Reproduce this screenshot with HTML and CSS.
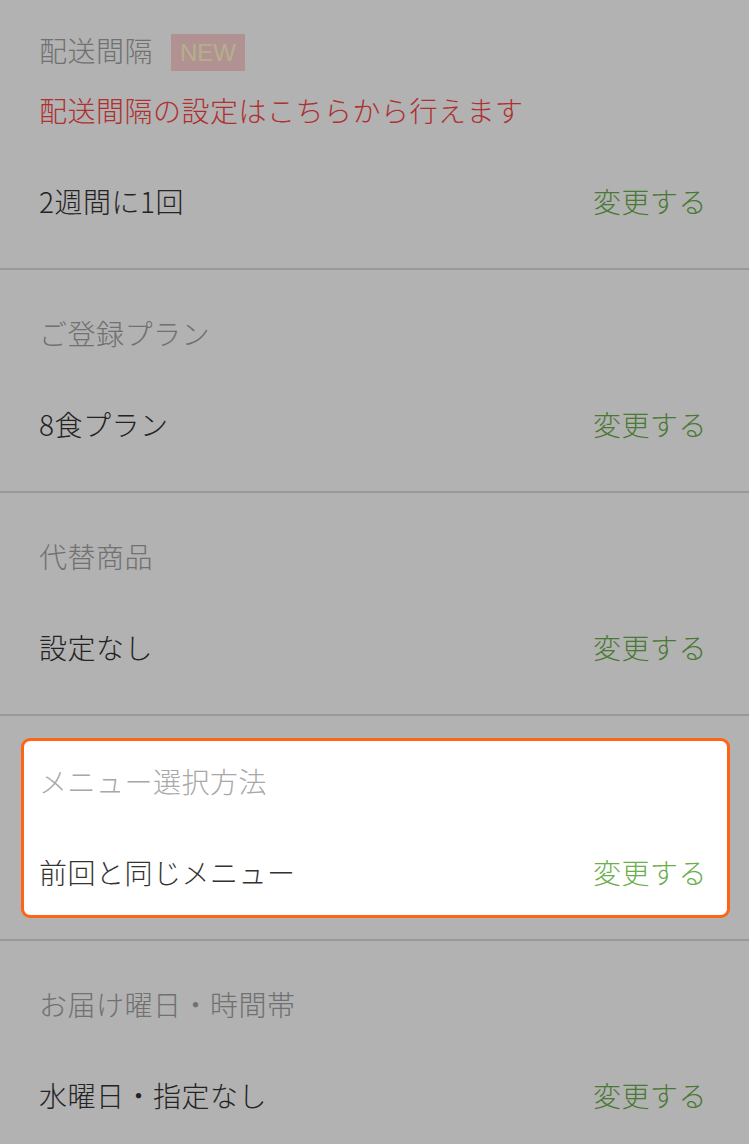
FILE: index.html
```html
<!DOCTYPE html>
<html lang="ja">
<head>
<meta charset="utf-8">
<title>定期便設定</title>
<link rel="stylesheet" href="styles.css">
</head>
<body>
<div class="page">
  <section class="section first">
    <div class="title-row">
      <span class="title">配送間隔</span>
      <span class="badge">NEW</span>
    </div>
    <p class="note">配送間隔の設定はこちらから行えます</p>
    <div class="value-row">
      <span class="value">2週間に1回</span>
      <span class="change">変更する</span>
    </div>
  </section>
  <section class="section">
    <div class="title">ご登録プラン</div>
    <div class="value-row">
      <span class="value">8食プラン</span>
      <span class="change">変更する</span>
    </div>
  </section>
  <section class="section">
    <div class="title">代替商品</div>
    <div class="value-row">
      <span class="value">設定なし</span>
      <span class="change">変更する</span>
    </div>
  </section>
  <section class="section highlight-wrap">
    <div class="card">
      <div class="title">メニュー選択方法</div>
      <div class="value-row">
        <span class="value">前回と同じメニュー</span>
        <span class="change">変更する</span>
      </div>
    </div>
  </section>
  <section class="section">
    <div class="title">お届け曜日・時間帯</div>
    <div class="value-row">
      <span class="value">水曜日・指定なし</span>
      <span class="change">変更する</span>
    </div>
  </section>
  <div class="overlay"></div>
</div>
</body>
</html>
```
FILE: styles.css
```css
html, body {
  margin: 0;
  padding: 0;
  background: #ffffff;
  height: 100%;
  overflow: hidden;
}
body {
  font-family: "Noto Sans CJK JP", "Noto Sans", sans-serif;
  font-size: 28px;
  font-weight: 300;
  line-height: 40px;
  letter-spacing: 0.5px;
}
.page {
  position: relative;
  width: 749px;
  height: 1144px;
  overflow: hidden;
  background: #ffffff;
}
.section {
  padding: 43px 42px 47px 39px;
  border-bottom: 2px solid #dcdcdc;
  display: flex;
  flex-direction: column;
  gap: 51px;
}
.section.first {
  padding-top: 30px;
  gap: 0;
}
.title-row {
  display: flex;
  align-items: flex-start;
  gap: 18px;
  height: 40px;
}
.title {
  color: #a2a2a2;
  height: 40px;
}
.badge {
  margin-top: 4px;
  height: 37px;
  line-height: 37px;
  padding: 0 9px;
  background: #ffd0d2;
  color: #fffcc8;
  font-family: "Liberation Sans", Arial, sans-serif;
  font-size: 24px;
  font-weight: 400;
  letter-spacing: 0;
}
.note {
  margin: 20px 0 51px;
  color: #fb4545;
  height: 40px;
}
.value-row {
  display: flex;
  justify-content: space-between;
  align-items: center;
  height: 40px;
}
.value {
  color: #333333;
}
.change {
  color: #6bae4c;
}
.highlight-wrap {
  padding: 22px 19px 21px 21px;
  gap: 0;
}
.card {
  position: relative;
  z-index: 2;
  background: #ffffff;
  border: 3px solid #ff6414;
  border-radius: 9px;
  padding: 20px 20px 23px 15px;
  display: flex;
  flex-direction: column;
  gap: 51px;
}
.card .title {
  color: #a8a8a8;
}
.overlay {
  position: absolute;
  inset: 0;
  z-index: 1;
  background: rgba(0, 0, 0, 0.3);
}
```
